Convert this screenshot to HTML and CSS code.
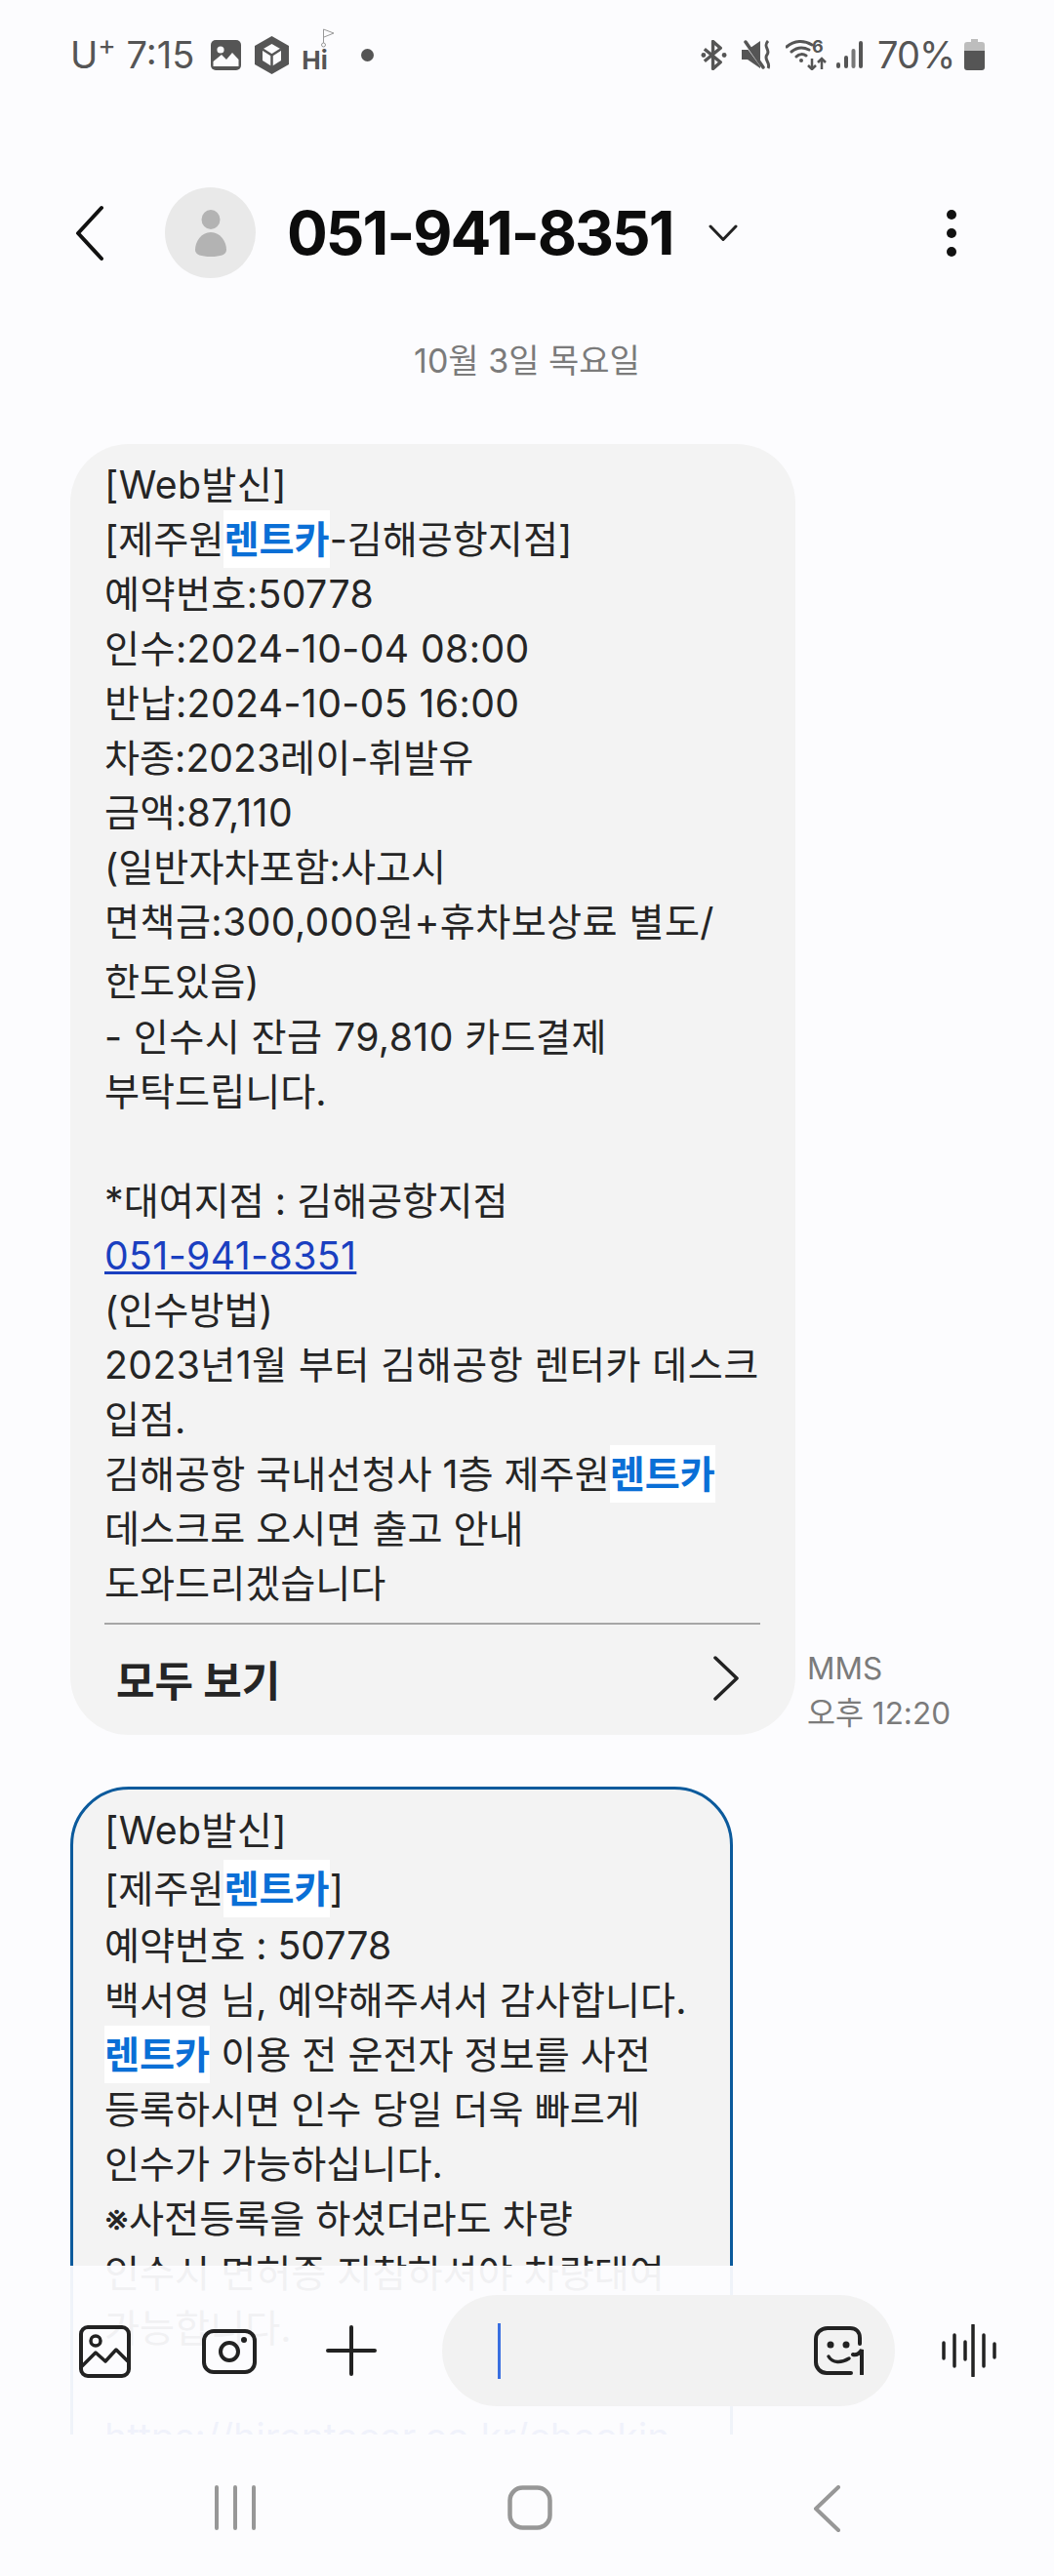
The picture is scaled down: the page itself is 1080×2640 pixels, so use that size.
FILE: index.html
```html
<!DOCTYPE html>
<html lang="ko">
<head>
<meta charset="UTF-8">
<meta name="viewport" content="width=device-width, initial-scale=1.0">
<title>051-941-8351</title>
<link rel="stylesheet" href="styles.css">
</head>
<body>
    <div class="status-bar">
        <span class="status-text">U<sup class="carrier-plus">+</sup> 7:15</span>
        <svg class="st-gallery" width="31" height="31" viewBox="0 0 31 31"><rect width="31" height="31" rx="5" fill="#555"/><circle cx="10" cy="10" r="3.6" fill="#fcfcfe"/><path d="M2.5 27 V22 L11 15 L16 20 L22 13 L28.500 20 V27 Z" fill="#fcfcfe"/></svg>
        <svg class="st-cube" width="35" height="39" viewBox="0 0 35 39"><path d="M17.500 0 L35 10 V29 L17.500 39 L0 29 V10 Z" fill="#555"/><path d="M17.500 8 L27 13.500 V25 L17.500 31 L8 25 V13.500 Z" fill="#fcfcfe"/><path d="M8 13.500 L17.500 19.500 L27 13.500 M17.500 19.500 V31" stroke="#555" stroke-width="2.500" fill="none"/></svg>
        <span class="st-hi">Hi<svg class="st-flag" width="14" height="20" viewBox="0 0 14 20"><circle cx="2.500" cy="17" r="2" fill="none" stroke="#999" stroke-width="1"/><path d="M2.500 15 V1 L13 5 L3 9" fill="none" stroke="#999" stroke-width="1"/></svg></span>
        <span class="st-dot"></span>
        <span class="status-right">
            <svg width="27" height="31" viewBox="0 0 28 31"><path d="M4 9 L21 23 L13 30 V1 L21 8 L4 22" fill="none" stroke="#555" stroke-width="3.500" stroke-linejoin="round"/><circle cx="3" cy="15.500" r="2.500" fill="#555"/><circle cx="25" cy="15.500" r="2.500" fill="#555"/></svg>
            <svg class="st-mute" width="30" height="30" viewBox="0 0 30 30"><path d="M0 10 H6 L19 1 V29 L6 20 H0 Z" fill="#555"/><path d="M1 0 L21 27" stroke="#fcfcfe" stroke-width="3"/><path d="M4 2 L22 28" stroke="#555" stroke-width="3.500" stroke-linecap="round"/><path d="M27 1 C21 7 30 10 26 15 C22 20 30 23 27 29" fill="none" stroke="#555" stroke-width="3"/></svg>
            <svg class="st-wifi" width="43" height="32" viewBox="0 0 43 32"><path d="M1 8 C9 1 19 1 27 6 M6 13 C12 8 18 8 24 11 M11 18 C14 15 18 15 21 17" fill="none" stroke="#555" stroke-width="3" stroke-linecap="round"/><circle cx="16" cy="22" r="2" fill="#555"/><text class="wifi-six" x="27" y="14">6</text><path d="M27 20 V31 M23 27 L27 31 L31 27 M37 31 V20 M33 24 L37 20 L41 24" fill="none" stroke="#555" stroke-width="2.500"/></svg>
            <svg class="st-signal" width="27" height="30" viewBox="0 0 27 30"><rect x="0" y="23" width="4" height="6" rx="2" fill="#555"/><rect x="8" y="16" width="4" height="13" rx="2" fill="#555"/><rect x="15.500" y="9" width="4" height="20" rx="2" fill="#777"/><rect x="23" y="1" width="4" height="28" rx="2" fill="#555"/></svg>
            <span class="status-text battery-text">70%</span>
            <svg class="st-battery" width="21" height="32" viewBox="0 0 21 32"><path d="M7 0 H14 V3 H18 Q21 3 21 6 V12 H0 V6 Q0 3 3 3 H7 Z" fill="#bdbdbd"/><path d="M0 12 H21 V29 Q21 32 18 32 H3 Q0 32 0 29 Z" fill="#555"/></svg>
        </span>
    </div>

    <div class="app-bar">
        <svg class="back-icon" width="32" height="58" viewBox="0 0 32 58"><path d="M28 3 L4 29 L28 55" fill="none" stroke="#111" stroke-width="4" stroke-linecap="round" stroke-linejoin="round"/></svg>
        <div class="avatar">
            <svg width="40" height="48" viewBox="0 0 40 48"><ellipse cx="20" cy="10" rx="9.500" ry="10" fill="#b3b3b3"/><path d="M20 23 C30 23 36 33 36 41 C36 46 30 48 20 48 C10 48 4 46 4 41 C4 33 10 23 20 23 Z" fill="#b3b3b3"/></svg>
        </div>
        <span class="contact">051-941-8351</span>
        <svg class="chevron-down" width="30" height="18" viewBox="0 0 30 18"><path d="M2 2 L15 15.500 L28 2" fill="none" stroke="#222" stroke-width="3" stroke-linecap="round" stroke-linejoin="round"/></svg>
        <div class="more-dots"><span></span><span></span><span></span></div>
    </div>

    <div class="date-label">10월 3일 목요일</div>

    <div class="messages">
        <div class="msg-row">
            <div class="bubble bubble-first">
                <div class="line line-num">[Web발신]</div>
                <div class="line">[제주원<span class="hl">렌트카</span>-김해공항지점]</div>
                <div class="line line-num">예약번호:50778</div>
                <div class="line line-num">인수:2024-10-04 08:00</div>
                <div class="line line-num">반납:2024-10-05 16:00</div>
                <div class="line">차종:2023레이-휘발유</div>
                <div class="line line-num">금액:87,110</div>
                <div class="line">(일반자차포함:사고시</div>
                <div class="line line-num">면책금:300,000원+휴차보상료 별도/</div>
                <div class="line line-tall">한도있음)</div>
                <div class="line line-num">- 인수시 잔금 79,810 카드결제</div>
                <div class="line">부탁드립니다.</div>
                <div class="line">&nbsp;</div>
                <div class="line">*대여지점 : 김해공항지점</div>
                <div class="line line-num"><a class="link" href="#">051-941-8351</a></div>
                <div class="line">(인수방법)</div>
                <div class="line line-num">2023년1월 부터 김해공항 렌터카 데스크</div>
                <div class="line">입점.</div>
                <div class="line">김해공항 국내선청사 1층 제주원<span class="hl">렌트카</span></div>
                <div class="line">데스크로 오시면 출고 안내</div>
                <div class="line">도와드리겠습니다</div>
                <div class="see-all">
                    <span>모두 보기</span>
                    <svg width="26" height="46" viewBox="0 0 26 46"><path d="M2 2 L24 23 L2 44" fill="none" stroke="#222" stroke-width="3.500" stroke-linecap="round" stroke-linejoin="round"/></svg>
                </div>
            </div>
            <div class="msg-meta">
                <div>MMS</div>
                <div>오후 12:20</div>
            </div>
        </div>

        <div class="msg-row">
            <div class="bubble bubble-selected">
                <div class="line line-num">[Web발신]</div>
                <div class="line line-hl">[제주원<span class="hl">렌트카</span>]</div>
                <div class="line">예약번호 : 50778</div>
                <div class="line">백서영 님, 예약해주셔서 감사합니다.</div>
                <div class="line"><span class="hl">렌트카</span> 이용 전 운전자 정보를 사전</div>
                <div class="line">등록하시면 인수 당일 더욱 빠르게</div>
                <div class="line">인수가 가능하십니다.</div>
                <div class="line">※사전등록을 하셨더라도 차량</div>
                <div class="line">인수시 면허증 지참하셔야 차량대여</div>
                <div class="line">가능합니다.</div>
                <div class="line">&nbsp;</div>
                <div class="line"><a class="link" href="#">https://hirentacar.co.kr/checkin</a></div>
                <div class="line">&nbsp;</div>
            </div>
        </div>
    </div>

    <div class="composer">
        <svg class="c-gallery" width="53" height="54" viewBox="0 0 53 54"><rect x="2" y="2" width="49" height="50" rx="7" fill="none" stroke="#222" stroke-width="4"/><circle cx="17" cy="16" r="5" fill="none" stroke="#222" stroke-width="3.500"/><path d="M3 42 L17 28 L27 37 L38 25 L50 37" fill="none" stroke="#222" stroke-width="3.500" stroke-linejoin="round"/></svg>
        <svg class="c-camera" width="56" height="46" viewBox="0 0 56 46"><rect x="2" y="2" width="52" height="42" rx="10" fill="none" stroke="#222" stroke-width="4"/><circle cx="28" cy="23" r="9" fill="none" stroke="#222" stroke-width="4"/><circle cx="43" cy="11" r="3" fill="#222"/></svg>
        <svg class="c-plus" width="52" height="52" viewBox="0 0 52 52"><path d="M26 2 V50 M2 26 H50" stroke="#222" stroke-width="4" stroke-linecap="round"/></svg>
        <div class="text-field">
            <span class="caret"></span>
            <svg width="52" height="50" viewBox="0 0 52 50"><path d="M47 18 V12 C47 6 43 2 37 2 H14 C7 2 2 7 2 13 V37 C2 43 7 48 13 48 H38" fill="none" stroke="#222" stroke-width="4" stroke-linecap="round"/><circle cx="17" cy="19" r="3.500" fill="#222"/><circle cx="33" cy="19" r="3.500" fill="#222"/><path d="M15 31 C19 38 28 38 36 33" fill="none" stroke="#222" stroke-width="3.500" stroke-linecap="round"/><path d="M40 29 C44 30 48 27 49 24 V49" fill="none" stroke="#222" stroke-width="4" stroke-linecap="round"/></svg>
        </div>
        <svg class="c-voice" width="56" height="54" viewBox="0 0 56 54"><path d="M2 19 V35 M13 11 V43 M24 18 V36 M32 1 V53 M43 11 V43 M54 20 V34" stroke="#222" stroke-width="3.500" stroke-linecap="round"/></svg>
    </div>

    <div class="nav-bar">
        <svg class="nav-recent" width="44" height="46" viewBox="0 0 44 46"><path d="M3 2 V44 M22 2 V44 M41 2 V44" stroke="#979797" stroke-width="4" stroke-linecap="round"/></svg>
        <svg class="nav-home" width="46" height="46" viewBox="0 0 46 46"><rect x="2.500" y="2.500" width="41" height="41" rx="13" fill="none" stroke="#979797" stroke-width="4.500"/></svg>
        <svg class="nav-back" width="28" height="48" viewBox="0 0 28 48"><path d="M26 2 L3 24 L26 46" fill="none" stroke="#979797" stroke-width="4" stroke-linecap="round" stroke-linejoin="round"/></svg>
    </div>
</body>
</html>
```

FILE: styles.css
```css
* {
    box-sizing: border-box;
}
html, body {
    margin: 0;
    height: 2640px;
    overflow: hidden;
}
body {
    position: relative;
    width: 1080px;
    background-color: #fcfcfe;
    font-family: Inter, "Noto Sans CJK KR", sans-serif;
    color: #252525;
}
svg {
    display: block;
    flex-shrink: 0;
}

/* status bar */
.status-bar {
    display: flex;
    align-items: center;
    height: 112px;
    padding: 0 71px 0 72px;
}
.status-text {
    font-size: 38px;
    color: #555;
    line-height: 44px;
}
.carrier-plus {
    font-size: 28px;
    line-height: 0;
    vertical-align: 14px;
}
.st-gallery {
    margin-left: 17px;
}
.st-cube {
    margin-left: 14px;
}
.st-hi {
    position: relative;
    margin-left: 13px;
    width: 36px;
    font-size: 26px;
    font-weight: 700;
    color: #555;
    padding-top: 11px;
}
.st-flag {
    position: absolute;
    left: 20px;
    top: -6px;
}
.st-dot {
    width: 13px;
    height: 13px;
    margin-left: 25px;
    border-radius: 50%;
    background-color: #555;
}
.status-right {
    display: flex;
    align-items: center;
    margin-left: auto;
}
.st-mute,
.st-wifi {
    margin-left: 15px;
}
.st-signal {
    margin-left: 9px;
}
.battery-text {
    width: 82px;
    margin-left: 15px;
    white-space: nowrap;
    letter-spacing: -1px;
}
.st-battery {
    margin-left: 7px;
}
.wifi-six {
    font-size: 18px;
    font-weight: 700;
    fill: #555;
}

/* top bar */
.app-bar {
    display: flex;
    align-items: center;
    height: 93px;
    margin-top: 80px;
    padding-left: 76px;
}
.avatar {
    display: flex;
    align-items: center;
    justify-content: center;
    width: 93px;
    height: 93px;
    margin-left: 61px;
    border-radius: 50%;
    background-color: #e9e9e9;
}
.contact {
    width: 399px;
    margin-left: 32px;
    font-size: 62px;
    font-weight: 700;
    color: #0c0c0c;
    letter-spacing: -2px;
    white-space: nowrap;
}
.chevron-down {
    margin-left: 33px;
}
.more-dots {
    display: flex;
    flex-direction: column;
    gap: 9px;
    margin-left: 214px;
}
.more-dots span {
    width: 10px;
    height: 10px;
    border-radius: 50%;
    background-color: #111;
}
.date-label {
    margin-top: 60px;
    text-align: center;
    font-size: 34px;
    line-height: 50px;
    color: #7b7b7b;
}

/* messages */
.messages {
    display: flex;
    flex-direction: column;
    gap: 53px;
    margin-top: 60px;
    padding-left: 72px;
}
.msg-row {
    display: flex;
    align-items: flex-end;
}
.bubble {
    padding: 14px 36px 0 35px;
    border-radius: 60px;
    background-color: #f3f3f3;
    font-size: 39.2px;
}
.bubble-first {
    width: 743px;
}
.bubble-selected {
    width: 679px;
    padding: 14px 33px 0 32px;
    border: 3px solid #0b5a9c;
}
.line {
    height: 56px;
    line-height: 56px;
    white-space: nowrap;
}
.line-num {
    letter-spacing: 0.4px;
}
.line-tall {
    height: 62px;
    line-height: 66px;
}
.line-hl {
    height: 62px;
    line-height: 64px;
}
.hl {
    padding: 6px 0;
    background-color: #fff;
    color: #0a6fd6;
    font-weight: 700;
}
.link {
    color: #1a3fc0;
    text-decoration: underline;
}
.see-all {
    display: flex;
    align-items: center;
    justify-content: space-between;
    height: 115px;
    margin-top: 12px;
    padding: 0 22px 4px 12px;
    border-top: 2px solid #a6a6a6;
    font-size: 43px;
    font-weight: 700;
}
.msg-meta {
    margin: 0 0 -1px 12px;
    font-size: 31.5px;
    line-height: 46px;
    color: #7b7b7b;
}

/* input bar, lies over the list */
.composer {
    position: absolute;
    left: 0;
    top: 2322px;
    width: 1080px;
    height: 173px;
    background-color: rgba(252, 252, 254, 0.95);
}
.composer > svg {
    position: absolute;
}
.c-gallery {
    left: 81px;
    top: 61px;
}
.c-camera {
    left: 207px;
    top: 65px;
}
.c-plus {
    left: 334px;
    top: 61px;
}
.c-voice {
    left: 965px;
    top: 60px;
}
.text-field {
    position: absolute;
    left: 453px;
    top: 30px;
    display: flex;
    align-items: center;
    justify-content: space-between;
    width: 464px;
    height: 114px;
    padding: 0 31px 0 57px;
    border-radius: 57px;
    background-color: #f2f2f2;
}
.caret {
    width: 3px;
    height: 57px;
    background-color: #3a6fe0;
}

/* bottom nav */
.nav-bar {
    position: absolute;
    left: 0;
    top: 2495px;
    width: 1080px;
    height: 145px;
    background-color: #fcfcfe;
}
.nav-bar svg {
    position: absolute;
    top: 52px;
}
.nav-recent {
    left: 219px;
}
.nav-home {
    left: 520px;
}
.nav-back {
    left: 833px;
}
```
